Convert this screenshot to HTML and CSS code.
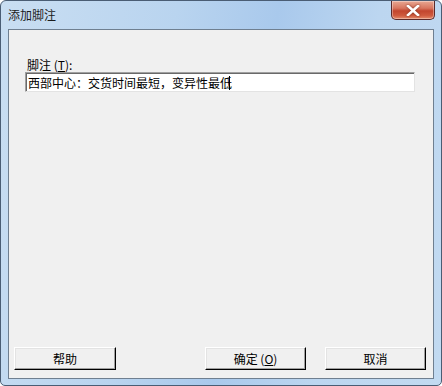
FILE: index.html
```html
<!DOCTYPE html>
<html>
<head>
<meta charset="utf-8">
<link rel="stylesheet" href="styles.css">
</head>
<body>
<div class="window">
  <div class="titlebar">
    <span class="title">添加脚注</span>
    <div class="close">
      <svg width="14" height="11" viewBox="0 0 14 11"><path d="M2 1 L12 10 M12 1 L2 10" stroke="#fff" stroke-width="2.6" stroke-linecap="square"/></svg>
    </div>
  </div>
  <div class="client">
    <div class="label">脚注 (<u>T</u>):</div>
    <div class="input">西部中心：交货时间最短，变异性最低<span class="caret"></span></div>
    <div class="buttons">
      <div class="btn btn-help">帮助</div>
      <div class="spacer"></div>
      <div class="btn">确定 (<u>O</u>)</div>
      <div class="btn">取消</div>
    </div>
  </div>
</div>
</body>
</html>
```
FILE: styles.css
```css
html, body {
  margin: 0;
  padding: 0;
  width: 442px;
  height: 386px;
  overflow: hidden;
  background: #ffffff;
}
.window {
  box-sizing: border-box;
  width: 442px;
  height: 386px;
  border: 1px solid #4a5d74;
  border-radius: 6px 6px 5px 5px;
  background: linear-gradient(100deg, #c9def2 0%, #b9d4ef 35%, #a9c9ec 55%, #bcd6f0 75%, #c2daf1 100%);
  display: flex;
  flex-direction: column;
  font-family: "Noto Sans CJK SC", "Liberation Sans", sans-serif;
  font-size: 12px;
  color: #000;
}
.titlebar {
  height: 28px;
  display: flex;
  align-items: flex-start;
  flex-shrink: 0;
}
.title {
  margin-left: 7px;
  margin-top: 7px;
  line-height: 14px;
  color: #1b1b1b;
}
.close {
  margin-left: auto;
  margin-right: 6px;
  width: 44px;
  height: 19px;
  box-sizing: border-box;
  border: 1px solid #5b2a2a;
  border-top: none;
  border-radius: 0 0 5px 5px;
  background: linear-gradient(180deg, #e8a893 0%, #d8765f 40%, #c2452e 55%, #cf5a3e 80%, #e58a6a 100%);
  display: flex;
  align-items: center;
  justify-content: center;
  box-shadow: inset 0 0 0 1px rgba(255,255,255,0.35);
}
.close svg {
  filter: drop-shadow(0 0 1px #7a2a1a);
}
.client {
  flex: 1;
  margin: 0 7px 6px 7px;
  border: 1px solid #6f7f90;
  background: #f0f0f0;
  display: flex;
  flex-direction: column;
}
.label {
  margin: 28px 0 1px 18px;
  line-height: 13px;
  height: 13px;
}
.input {
  margin: 0 18px 0 16px;
  height: 20px;
  box-sizing: border-box;
  background: #fff;
  border-top: 1px solid #a0a0a0;
  border-left: 1px solid #a0a0a0;
  border-right: 1px solid #e3e3e3;
  border-bottom: 1px solid #e3e3e3;
  box-shadow: inset 1px 1px 0 #696969;
  padding: 1px 0 0 2px;
  line-height: 17px;
  display: flex;
  align-items: center;
  white-space: nowrap;
}
.caret {
  display: inline-block;
  width: 1px;
  height: 14px;
  background: #000;
  margin-left: -3px;
}
.buttons {
  margin-top: auto;
  display: flex;
  gap: 19px;
  padding: 0 7px 8px 5px;
}
.spacer {
  flex: 1;
  margin-left: -19px;
}
.btn {
  width: 101px;
  height: 23px;
  box-sizing: border-box;
  background: #f0f0f0;
  border-top: 1px solid #fff;
  border-left: 1px solid #fff;
  border-right: 1px solid #000;
  border-bottom: 1px solid #000;
  box-shadow: inset -1px -1px 0 #a0a0a0, inset 1px 1px 0 #e3e3e3;
  display: flex;
  align-items: center;
  justify-content: center;
  line-height: 14px;
}
.btn-help {
  width: 102px;
}
u {
  text-decoration: underline;
}
```
